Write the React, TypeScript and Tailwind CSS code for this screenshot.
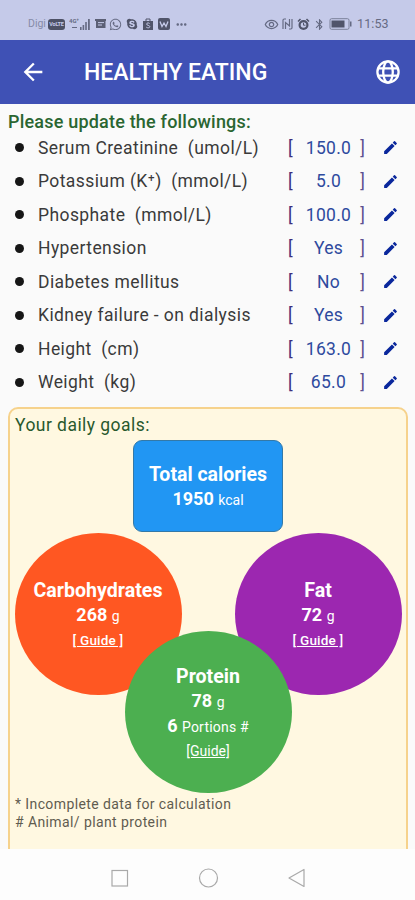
import {
  MdArrowBack,
  MdBluetooth,
  MdEdit,
  MdMoreHoriz,
  MdOutlineRemoveRedEye,
} from 'react-icons/md'
import { FaSkype, FaWhatsapp } from 'react-icons/fa'

type Reading = {
  label: string
  value: string
}

const readings: Reading[] = [
  { label: 'Serum Creatinine  (umol/L)', value: '150.0' },
  { label: 'Potassium (K⁺)  (mmol/L)', value: '5.0' },
  { label: 'Phosphate  (mmol/L)', value: '100.0' },
  { label: 'Hypertension', value: 'Yes' },
  { label: 'Diabetes mellitus', value: 'No' },
  { label: 'Kidney failure - on dialysis', value: 'Yes' },
  { label: 'Height  (cm)', value: '163.0' },
  { label: 'Weight  (kg)', value: '65.0' },
]

function StatusBar() {
  return (
    <div className="flex h-10 items-center justify-between bg-[#c5cae9] pt-2 pl-7 pr-[26px] text-[#656a83]">
      <div className="flex items-center">
        <span className="w-5 text-[10.500px] text-[#858aa8]">Digi</span>
        <span className="flex h-[11px] w-[17px] shrink-0 items-center justify-center rounded-[3px] bg-[#4d5166] text-[5.500px] font-bold tracking-[-0.2px] text-[#c5cae9]">
          VoLTE
        </span>
        <svg className="ml-1 h-3 w-[22px]" viewBox="0 0 22 12" fill="currentColor">
          <text x="0" y="5" fontSize="6" fontWeight="700">4G⁺</text>
          <path d="M3 9h5v1H3zM11 9h1.600v3H11zM13.600 7h1.600v5h-1.600zM16.200 4h1.600v8h-1.600zM19 1h1.800v11H19z" />
        </svg>
        <svg className="ml-1 h-3 w-[11px]" viewBox="0 0 11 12">
          <path d="M0 1h11v2H0zM1 3h9.500v7H1z" fill="#5b5f75" />
          <path d="M3 4.600h6M3 7h4" stroke="#c5cae9" />
        </svg>
        <FaWhatsapp className="ml-[3px] size-[13px]" />
        <FaSkype className="ml-1 size-[12px] text-[#50546a]" />
        <svg className="ml-[5px] h-3 w-[10px]" viewBox="0 0 10 12">
          <path d="M0 3h10v9H0z" fill="#50546a" />
          <path d="M3 3.500V1h4v2.500" fill="none" stroke="#50546a" />
          <path d="M6.600 5.500c-1-1-3-.6-3 .6 0 1.500 3.200 1 3.200 2.500 0 1.400-2.200 1.600-3.500.6" fill="none" stroke="#c5cae9" />
        </svg>
        <svg className="ml-[5px] size-3" viewBox="0 0 12 12">
          <rect width="12" height="12" rx="2" fill="#50546a" />
          <path d="M2 3.500l2 5 2-3.500 2 3.500 2-5" fill="none" stroke="#c5cae9" strokeWidth="1.300" />
        </svg>
        <MdMoreHoriz className="ml-1 size-[15px]" />
      </div>
      <div className="flex items-center">
        <MdOutlineRemoveRedEye className="size-[15px]" />
        <svg className="ml-[3px] h-3 w-[11px]" viewBox="0 0 11 12" fill="none" stroke="currentColor" strokeWidth="1.200">
          <path d="M4 1H2.200Q1 1 1 2.200V11M3.500 11V4.500L7.500 8V1M7 11h1.800Q10 11 10 9.800V1" />
        </svg>
        <svg className="ml-1 size-[13px]" viewBox="0 0 13 13">
          <path d="M1 3.500L3.500 1M12 3.500L9.500 1" stroke="#50546a" strokeWidth="1.500" />
          <circle cx="6.500" cy="7" r="5" fill="#50546a" />
          <circle cx="6.500" cy="7" r="2.800" fill="#c5cae9" />
          <path d="M6.500 4.800V7.200h2" fill="none" stroke="#50546a" />
        </svg>
        <MdBluetooth className="ml-[3px] size-[13px]" />
        <svg className="ml-[3px] h-3 w-6" viewBox="0 0 24 12">
          <rect x="1" y=".7" width="19" height="10.600" rx="1.500" fill="none" stroke="#7b8099" />
          <rect x="2.500" y="2.500" width="13" height="7" fill="#50546a" />
          <path d="M21 3.500h1.500v5H21z" fill="#656a83" />
        </svg>
        <span className="ml-1 w-8 text-[12.500px] tracking-[0.1px] whitespace-nowrap">11:53</span>
      </div>
    </div>
  )
}

function Header() {
  return (
    <header className="flex h-16 items-center bg-[#3f51b5] text-white">
      <MdArrowBack className="ml-[19px] size-7" />
      <h1 className="ml-[37px] pt-[3px] text-[23px] font-medium whitespace-nowrap">HEALTHY EATING</h1>
      <svg
        className="mr-[15px] ml-auto size-6"
        viewBox="0 0 24 24"
        fill="none"
        stroke="currentColor"
        strokeWidth="2.300"
      >
        <circle cx="12" cy="12" r="10.600" />
        <ellipse cx="12" cy="12" rx="4.800" ry="10.600" />
        <path d="M2.300 8.300h19.400M2.300 15.700h19.400" />
      </svg>
    </header>
  )
}

function ReadingRow({ label, value }: Reading) {
  return (
    <li className="flex h-[33.500px] items-center text-[17.500px] text-[#3a3a3a]">
      <span className="ml-[15px] size-[9px] rounded-full bg-[#161616]" />
      <span className="ml-[14px] grow tracking-[0.41px] whitespace-pre">{label}</span>
      <span className="flex w-[77px] justify-between text-[#2e4a9e]">
        <span className="text-[#3d2f7c]">[</span>
        <span className="w-[52px] pl-1 text-center tracking-[0.3px] whitespace-nowrap">{value}</span>
        <span className="text-[#5d5190]">]</span>
      </span>
      <MdEdit className="mr-[16px] ml-[17px] size-[17px] text-[#0a279c]" />
    </li>
  )
}

type GoalProps = {
  name: string
  grams: string
  guide: string
  portions?: string
  color: string
}

function Goal({ name, grams, guide, portions, color }: GoalProps) {
  return (
    <div
      className={`flex h-[162px] w-[167px] flex-col items-center justify-center rounded-[50%] pt-[3px] text-center text-white ${color}`}
    >
      <p className="pt-px text-[19.600px] leading-6 font-bold">{name}</p>
      <p className="text-[18px] leading-6 font-bold">
        {grams} <span className="text-[14px] font-normal">g</span>
      </p>
      {portions && (
        <p className="text-[18px] leading-6 font-bold">
          {portions} <span className="text-[14px] font-normal tracking-[0.2px]">Portions #</span>
        </p>
      )}
      <p
        className={`leading-[25px] underline ${portions ? 'text-[14px]' : 'text-[13.500px] font-medium tracking-[0.2px]'}`}
      >
        {guide}
      </p>
    </div>
  )
}

function NavBar() {
  return (
    <nav className="flex h-[51px] items-center justify-center bg-[#fdfdfd] pt-[7px]">
      <svg className="h-5 w-[200px]" viewBox="0 0 200 20" fill="none" stroke="#a9a9a9" strokeWidth="1.200">
        <rect x="4" y="2.500" width="15.500" height="15.500" />
        <circle cx="100.500" cy="10" r="9" />
        <path d="M196 1.500v17l-15-8.500z" strokeLinejoin="round" />
      </svg>
    </nav>
  )
}

export default function App() {
  return (
    <div className="flex h-[900px] w-[415px] flex-col overflow-hidden bg-[#fafafa] font-['Roboto',sans-serif]">
      <StatusBar />
      <Header />

      <main className="flex h-[745px] flex-col overflow-hidden">
        <h2 className="mt-[5px] ml-2 h-[22px] text-[18px] leading-[26px] font-medium tracking-[0.2px] text-[#2a6631]">
          Please update the followings:
        </h2>
        <ul>
          {readings.map((reading) => (
            <ReadingRow key={reading.label} {...reading} />
          ))}
        </ul>

        <section className="mx-2 mt-2 h-[460px] w-[400px] shrink-0 rounded-[10px] border-2 border-[#f6d28c] bg-[#fff8e1]">
          <h2 className="ml-[5px] h-[31px] text-[17.500px] leading-[33px] tracking-[0.45px] text-[#28592d]">
            Your daily goals:
          </h2>
          <div className="mx-auto flex h-[92px] w-[150px] flex-col items-center justify-center rounded-[9px] border border-[#3379a8] bg-[#2196f3] pt-[3px] text-white">
            <p className="text-[19.500px] leading-6 font-bold">Total calories</p>
            <p className="text-[18px] leading-6 font-bold">
              1950 <span className="text-[14px] font-normal">kcal</span>
            </p>
          </div>
          <div className="mt-px flex justify-between px-[4.500px]">
            <Goal name="Carbohydrates" grams="268" guide="[ Guide ]" color="bg-[#ff5722]" />
            <Goal name="Fat" grams="72" guide="[ Guide ]" color="bg-[#9c27b0]" />
          </div>
          <div className="relative -mt-16 flex justify-center">
            <Goal name="Protein" grams="78" portions="6" guide="[Guide]" color="bg-[#4caf50]" />
          </div>
          <div className="mt-[2px] ml-[5px] text-[14px] leading-[18px] tracking-[0.4px] text-[#5f5c50]">
            <p>* Incomplete data for calculation</p>
            <p># Animal/ plant protein</p>
          </div>
        </section>
      </main>

      <NavBar />
    </div>
  )
}
